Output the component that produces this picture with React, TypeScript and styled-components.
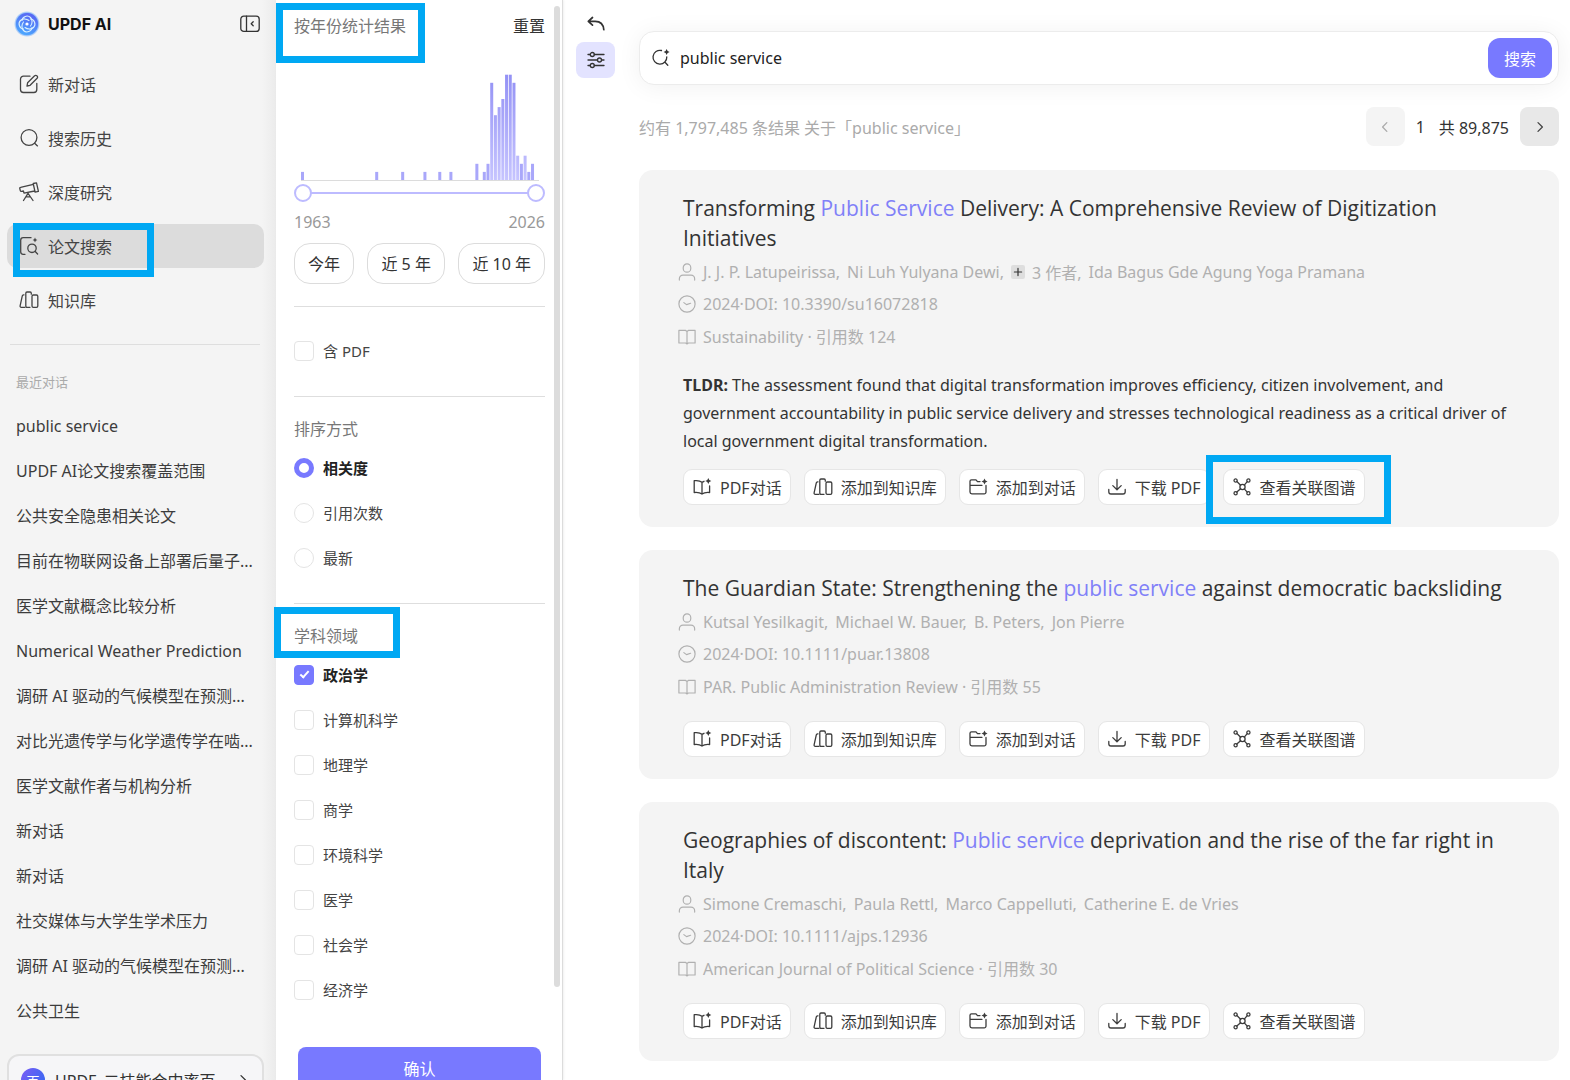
import React, { useState } from "react";
import styled, { createGlobalStyle, css } from "styled-components";

const accent = "#7879ff";
const marker = "#00a8f3";

const GlobalStyle = createGlobalStyle`
  *, *::before, *::after { box-sizing: border-box; }
  body {
    margin: 0;
    background: #fff;
    color: #333;
    font-family: "Noto Sans", "Noto Sans CJK SC", sans-serif;
    font-size: 16px;
  }
  button, input { font: inherit; color: inherit; }
  button { cursor: pointer; }
  h1, h2, h3, p, ul { margin: 0; padding: 0; font-weight: 400; }
  ul { list-style: none; }
`;

/* ---------- layout ---------- */

const Page = styled.div`
  display: grid;
  grid-template-columns: 276px 287px minmax(0, 1fr);
  height: 100vh;
  overflow: hidden;
`;

const Sidebar = styled.aside`
  position: relative;
  background: linear-gradient(90deg, #f4f4f4 0, #f4f4f4 262px, #ebebeb 276px);
  padding: 0 12px 0 7px;
  height: 100vh;
`;

const FilterPanel = styled.aside`
  position: relative;
  height: 100vh;
  border-right: 1px solid #dcdcdc;
  box-shadow: 1px 0 2px rgba(0, 0, 0, 0.06);
  padding: 0 17px 0 18px;
`;

const Main = styled.main`
  display: grid;
  grid-template-columns: 39px minmax(0, 1fr);
  column-gap: 24px;
  padding: 0 11px 0 13px;
`;

/* A thick highlight frame laid over part of the page */
const Frame = styled.span<{ $inset: string }>`
  position: absolute;
  inset: ${(p) => p.$inset};
  border: 7px solid ${marker};
  pointer-events: none;
  z-index: 2;
`;

/* ---------- sidebar ---------- */

const Brand = styled.header`
  display: flex;
  align-items: center;
  gap: 8px;
  height: 48px;
  padding: 0 4px 0 7px;
`;

const BrandName = styled.h1`
  flex: 1;
  color: #111;
  font-family: Inter, sans-serif;
  font-size: 16px;
  font-weight: 700;
`;

const IconButton = styled.button`
  display: flex;
  padding: 0;
  border: 0;
  background: none;
`;

const Nav = styled.nav`
  display: flex;
  flex-direction: column;
  gap: 10px;
  margin-top: 14px;
`;

const NavItem = styled.a<{ $active?: boolean }>`
  position: relative;
  display: flex;
  align-items: center;
  gap: 9px;
  height: 44px;
  padding-left: 12px;
  border-radius: 10px;
  color: #444;
  text-decoration: none;
  background: ${(p) => (p.$active ? "#dcdcdc" : "transparent")};
`;

const RecentSection = styled.section`
  margin: 22px 4px 0 3px;
  border-top: 1px solid #dedede;
  padding: 22px 0 0 6px;
`;

const RecentTitle = styled.h2`
  color: #aaa;
  font-size: 13px;
  line-height: 30px;
`;

const RecentList = styled.ul`
  margin-top: 7px;
`;

const RecentLink = styled.a`
  display: block;
  color: #3c3c3c;
  line-height: 45px;
  text-decoration: none;
  white-space: nowrap;
`;

const Account = styled.button`
  display: flex;
  align-items: center;
  gap: 10px;
  width: 100%;
  height: 52px;
  margin-top: 20px;
  padding: 0 11px 0 12px;
  border: 2px solid #e0e0e0;
  border-radius: 12px;
  background: #f6f6f8;
  text-align: left;
`;

const Avatar = styled.span`
  display: grid;
  place-items: center;
  width: 24px;
  height: 24px;
  border-radius: 50%;
  background: linear-gradient(120deg, #7b5cf5, #2f6bf2);
  color: #fff;
  font-size: 13px;
`;

const AccountName = styled.span`
  flex: 1;
  white-space: nowrap;
`;

/* ---------- filters ---------- */

const FilterHead = styled.header`
  position: relative;
  display: flex;
  align-items: center;
  justify-content: space-between;
  height: 50px;
`;

const Muted = styled.h2`
  color: #777;
  font-size: 16px;
`;

const ResetButton = styled.button`
  padding: 0;
  border: 0;
  background: none;
  color: #333;
`;

const Chart = styled.svg`
  display: block;
  width: 100%;
  height: 129px;
  margin-top: 2px;
`;

const RangeSlider = styled.div`
  display: grid;
  height: 18px;
  margin-top: 3px;
  background: linear-gradient(#bdbbff, #bdbbff) center / calc(100% - 32px) 2px no-repeat;
`;

const RangeInput = styled.input`
  grid-area: 1 / 1;
  width: 100%;
  height: 18px;
  margin: 0;
  appearance: none;
  background: none;
  pointer-events: none;
  &::-webkit-slider-thumb {
    appearance: none;
    width: 18px;
    height: 18px;
    border: 2px solid #bdbbff;
    border-radius: 50%;
    background: #fff;
    pointer-events: auto;
  }
`;

const YearRow = styled.div`
  display: flex;
  justify-content: space-between;
  margin-top: 8px;
  color: #999;
  line-height: 24px;
`;

const PillRow = styled.div`
  display: flex;
  justify-content: space-between;
  margin-top: 9px;
`;

const Pill = styled.button`
  height: 41px;
  padding: 0 13px 2px;
  border: 1px solid #dcdcdc;
  border-radius: 16px;
  background: #fff;
`;

const YearSection = styled.section`
  padding-bottom: 22px;
`;

const OptionSection = styled.fieldset<{ $padding: string }>`
  position: relative;
  min-width: 0;
  margin: 0;
  padding: ${(p) => p.$padding};
  border: 0;
  border-top: 1px solid #dedede;
`;

const OptionTitle = styled(Muted)`
  line-height: 31px;
`;

const OptionRow = styled.label<{ $checked?: boolean }>`
  display: flex;
  align-items: center;
  gap: 9px;
  height: 45px;
  color: ${(p) => (p.$checked ? "#222" : "#444")};
  font-size: 15px;
  font-weight: ${(p) => (p.$checked ? 700 : 400)};
  cursor: pointer;
`;

const control = css`
  appearance: none;
  flex: none;
  width: 20px;
  height: 20px;
  margin: 0;
  border: 1px solid #e4e4e4;
  background: #fff;
`;

const Checkbox = styled.input`
  ${control}
  display: grid;
  place-items: center;
  border-radius: 4px;
  &:checked {
    border-color: ${accent};
    background: ${accent};
  }
  &:checked::after {
    content: "";
    width: 9px;
    height: 5px;
    border: solid #fff;
    border-width: 0 0 2px 2px;
    transform: translateY(-1px) rotate(-48deg);
  }
`;

const Radio = styled.input`
  ${control}
  border-radius: 50%;
  &:checked { border: 5px solid ${accent}; }
`;

const ConfirmButton = styled.button`
  display: block;
  width: calc(100% - 8px);
  height: 42px;
  margin: 35px 4px 0;
  border: 0;
  border-radius: 8px;
  background: ${accent};
  color: #fff;
`;

const ScrollThumb = styled.span`
  position: absolute;
  top: 6px;
  right: 2px;
  width: 6px;
  height: calc(100% - 99px);
  border-radius: 3px;
  background: #dcdcdc;
`;

const SubjectFrame = styled(Frame)`
  height: 51px;
`;

/* ---------- results ---------- */

const Tools = styled.div`
  display: flex;
  flex-direction: column;
  align-items: center;
  gap: 8px;
  padding-top: 14px;
`;

const FilterToggle = styled(IconButton)`
  align-items: center;
  justify-content: center;
  width: 39px;
  height: 36px;
  border-radius: 8px;
  background: #e3e3ff;
`;

const Results = styled.div`
  min-width: 0;
  padding-top: 31px;
`;

const SearchBar = styled.form`
  display: flex;
  align-items: center;
  gap: 9px;
  height: 54px;
  padding: 0 6px 0 11px;
  border: 1px solid #ececec;
  border-radius: 15px;
  background: #fff;
  box-shadow: 0 2px 24px rgba(0, 0, 0, 0.06);
`;

const SearchInput = styled.input`
  flex: 1;
  min-width: 0;
  padding: 0;
  border: 0;
  outline: 0;
  background: none;
  color: #222;
`;

const SearchButton = styled.button`
  width: 64px;
  height: 40px;
  border: 0;
  border-radius: 12px;
  background: ${accent};
  color: #fff;
`;

const Summary = styled.div`
  display: flex;
  align-items: center;
  justify-content: space-between;
  margin: 22px 0 24px;
`;

const SummaryText = styled.p`
  color: #aaa;
`;

const Pager = styled.div`
  display: flex;
  align-items: center;
  gap: 11px;
`;

const PageNumber = styled.span`
  padding-right: 3px;
`;

const PagerButton = styled.button`
  display: grid;
  place-items: center;
  width: 39px;
  height: 39px;
  padding: 0;
  border: 0;
  border-radius: 8px;
  background: #e8e8e8;
  color: #444;
  &:disabled { background: #f4f4f4; color: #aaa; }
`;

const CardList = styled.div`
  display: flex;
  flex-direction: column;
  gap: 23px;
`;

const Card = styled.article`
  padding: 23px 44px 22px;
  border-radius: 14px;
  background: #f4f4f4;
`;

const CardTitle = styled.h3`
  color: #333;
  font-family: "Open Sans", "Noto Sans CJK SC", sans-serif;
  font-size: 21px;
  line-height: 30px;
`;

const Hit = styled.em`
  color: #8080f8;
  font-style: normal;
`;

const MetaList = styled.ul`
  margin: 3px 0 0 -5px;
  color: #b0b0b0;
`;

const MetaRow = styled.li`
  display: flex;
  align-items: center;
  gap: 7px;
  height: 32px;
  white-space: nowrap;
`;

const Authors = styled.span`
  display: flex;
  align-items: center;
  gap: 7px;
`;

const MoreAuthors = styled.button`
  display: grid;
  place-items: center;
  width: 14px;
  height: 14px;
  padding: 0;
  border: 0;
  border-radius: 2px;
  background: #dedede;
  color: #333;
`;

const Tldr = styled.p`
  margin-top: 19px;
  color: #333;
  line-height: 28px;
`;

const Actions = styled.div<{ $afterText?: boolean }>`
  display: flex;
  gap: 13px;
  margin-top: ${(p) => (p.$afterText ? 14 : 19)}px;
`;

const ActionSlot = styled.div`
  position: relative;
`;

const ActionButton = styled.button`
  display: flex;
  align-items: center;
  gap: 8px;
  height: 36px;
  padding: 0 8px;
  border: 1px solid #e6e6e6;
  border-radius: 9px;
  background: #fff;
  color: #3c3c3c;
  white-space: nowrap;
`;

/* ---------- icons ---------- */

const Glyph = styled.svg`
  display: block;
  flex: none;
  fill: none;
  stroke: currentColor;
  stroke-linecap: round;
  stroke-linejoin: round;
`;

type IconProps = { size?: number; weight?: number; children: React.ReactNode };

const Icon = ({ size = 20, weight = 1.3, children }: IconProps) => (
  <Glyph width={size} height={size} viewBox="0 0 20 20" strokeWidth={weight} aria-hidden="true">
    {children}
  </Glyph>
);

const spark = "M0 -3 L1 -1 L3 0 L1 1 L0 3 L-1 1 L-3 0 L-1 -1 Z";

const LogoIcon = () => (
  <Glyph width={26} height={26} viewBox="0 0 26 26" aria-hidden="true">
    <defs>
      <radialGradient id="logo-glow" cx="0.5" cy="0.5" r="0.5">
        <stop offset="0.8" stopColor="#5aa0fb" />
        <stop offset="1" stopColor="#5aa0fb" stopOpacity="0" />
      </radialGradient>
      <linearGradient id="logo-fill" x1="0.7" y1="0" x2="0.3" y2="1">
        <stop offset="0" stopColor="#5a62f2" />
        <stop offset="1" stopColor="#4aa9ff" />
      </linearGradient>
    </defs>
    <circle cx="13" cy="13" r="13" fill="url(#logo-glow)" stroke="none" />
    <circle cx="13" cy="13" r="11" fill="url(#logo-fill)" stroke="none" />
    <g stroke="#d9f1ff" strokeWidth="1.1">
      {[0, 90, 180, 270].map((a) => (
        <path key={a} transform={`rotate(${a} 13 13)`} d="M8 9.5C8.3 5.6 13.5 3.5 16.5 6.500C18.7 8.7 18.5 12.5 16.5 15" />
      ))}
    </g>
    <circle cx="13" cy="13" r="1.6" fill="#fff" stroke="none" />
  </Glyph>
);

const CollapseIcon = () => (
  <Icon weight={1.3}>
    <rect x="0.8" y="2.2" width="18.4" height="15.2" rx="3" />
    <path d="M6.500 2.200v15.200M13.200 7.800l-2 2 2 2" />
  </Icon>
);

const ComposeIcon = () => (
  <Icon>
    <path d="M11 2.200H4.500A3 3 0 0 0 1.500 5.200v10.300a3 3 0 0 0 3 3h10.300a3 3 0 0 0 3-3V9.500" />
    <path d="M8 12l.6-3.200 7-7a1.500 1.500 0 0 1 2.200 0l.3.300a1.500 1.500 0 0 1 0 2.200l-7 7z" />
  </Icon>
);

const SearchIcon = () => (
  <Icon>
    <circle cx="10" cy="9.500" r="7.900" />
    <path d="M15.600 15.200l2.900 2.700" />
  </Icon>
);

const TelescopeIcon = () => (
  <Icon>
    <path d="M14.200 1.500l3.300-.7 1.900 8.600-3.300.7zM14.300 2.300L1.600 5.300a1 1 0 0 0-.8 1.200l.5 2.100a1 1 0 0 0 1.200.8l1.900-.4.6 2.200 10.600-2.200" />
    <path d="M9 11.400L4.500 18.500M9 11.400l5 7.100M7 14.800h4.500" />
  </Icon>
);

const PaperSearchIcon = () => (
  <Icon>
    <path d="M12 1.700H4.200a2.500 2.500 0 0 0-2.500 2.500v11.600a2.500 2.500 0 0 0 2.500 2.500H6" />
    <circle cx="13" cy="12.300" r="4.200" />
    <path d="M16 15.300l2.600 2.700" />
    <path d={spark} transform="translate(16 4) scale(0.8)" fill="currentColor" stroke="none" />
  </Icon>
);

const BooksIcon = () => (
  <Icon>
    <path d="M5 4.800H4.500a1.200 1.200 0 0 0-1.200 1L1.100 15.800a1.200 1.200 0 0 0 1.200 1.500H6" />
    <path d="M11 17.300H8a1.200 1.200 0 0 1-1.200-1.200V3.200A1.200 1.200 0 0 1 8 2h3.100a1.200 1.200 0 0 1 1.200 1.200v1" />
    <rect x="13" y="5" width="5.800" height="12.300" rx="1.300" />
  </Icon>
);

const ReturnIcon = () => (
  <Icon weight={1.7}>
    <path d="M6.500 3.500L2.300 7.300l4.200 3.800M2.800 7.300h6.400c5 0 8.200 3.200 8.600 8.400" />
  </Icon>
);

const SlidersIcon = () => (
  <Icon>
    <path d="M2 4.500h2.300M8.300 4.500H18M2 10h9.500M15.500 10H18M2 15.500h2.300M8.300 15.500H18" />
    <circle cx="6.300" cy="4.500" r="2" />
    <circle cx="13.500" cy="10" r="2" />
    <circle cx="6.300" cy="15.500" r="2" />
  </Icon>
);

const SmartSearchIcon = () => (
  <Icon>
    <path d="M10.500 2.500A6.900 6.900 0 1 0 15.800 8.800M14 14.300l2.800 3" />
    <path d={spark} transform="translate(15.600 4)" fill="currentColor" stroke="none" />
  </Icon>
);

const ChevronIcon = ({ left }: { left?: boolean }) => (
  <Icon size={16} weight={1.6}>
    <path d={left ? "M12.300 4.500L7 10l5.300 5.500" : "M7.500 4.500l5.500 5.500-5.500 5.500"} />
  </Icon>
);

const PersonIcon = () => (
  <Icon size={18}>
    <rect x="5.800" y="1" width="8.400" height="9.200" rx="4.200" />
    <path d="M1.500 19v-1.500a4 4 0 0 1 4-4h9a4 4 0 0 1 4 4V19" />
  </Icon>
);

const ClockIcon = () => (
  <Icon size={18}>
    <circle cx="10" cy="10" r="9" />
    <path d="M6.500 8.500l3 2.200 4.500-1.500" />
  </Icon>
);

const JournalIcon = () => (
  <Icon size={18}>
    <path d="M1 3.800h7.500L10 5l1.500-1.200H19v14h-7.500L10 18.800l-1.500-1H1zM10 5v13.800" />
  </Icon>
);

const ReadIcon = () => (
  <Icon>
    <path d="M10 5.300v11.800M12 4.300L10 5.300C8.200 3.700 5.500 3.300 2.200 3.700V15.500c3-.3 5.800 0 7.800 1.600 2-1.600 4.500-1.900 7.600-1.600V9" />
    <path d={spark} transform="translate(16.300 4)" fill="currentColor" stroke="none" />
  </Icon>
);

const FolderIcon = () => (
  <Icon>
    <path d="M12 4.600H9.500L8 2.800H3.500A1.500 1.500 0 0 0 2 4.300v10.800a1.800 1.800 0 0 0 1.800 1.800h12.400a1.800 1.800 0 0 0 1.800-1.800V8.500M2 8.300h12" />
    <path d={spark} transform="translate(16.500 4.500)" fill="currentColor" stroke="none" />
  </Icon>
);

const DownloadIcon = () => (
  <Icon>
    <path d="M10 2.500v10M5.800 8.600L10 12.800l4.200-4.200M1.800 12.500v2.300a2.200 2.200 0 0 0 2.200 2.200h12a2.200 2.200 0 0 0 2.200-2.200v-2.300" />
  </Icon>
);

const GraphIcon = () => (
  <Icon>
    <circle cx="10.500" cy="10" r="2.600" />
    <circle cx="3.600" cy="3.500" r="1.600" />
    <circle cx="16.400" cy="3.500" r="1.600" />
    <circle cx="3.600" cy="16.200" r="1.600" />
    <circle cx="16.400" cy="16.200" r="1.600" />
    <path d="M4.900 4.500l3.700 3.700M15.200 4.600l-2.900 3.500M4.800 15.100l3.800-3.300M15.200 15.100l-2.900-3.200" />
  </Icon>
);

/* ---------- data ---------- */

const navItems = [
  { label: "新对话", icon: <ComposeIcon /> },
  { label: "搜索历史", icon: <SearchIcon /> },
  { label: "深度研究", icon: <TelescopeIcon /> },
  { label: "论文搜索", icon: <PaperSearchIcon />, active: true },
  { label: "知识库", icon: <BooksIcon /> },
];

const recent = [
  "public service",
  "UPDF AI论文搜索覆盖范围",
  "公共安全隐患相关论文",
  "目前在物联网设备上部署后量子...",
  "医学文献概念比较分析",
  "Numerical Weather Prediction",
  "调研 AI 驱动的气候模型在预测...",
  "对比光遗传学与化学遗传学在啮...",
  "医学文献作者与机构分析",
  "新对话",
  "新对话",
  "社交媒体与大学生学术压力",
  "调研 AI 驱动的气候模型在预测...",
  "公共卫生",
];

const firstYear = 1963;
const lastYear = 2026;

/* papers per year: [year, count] */
const histogram = [
  [1963, 1], [1983, 1], [1990, 1], [1996, 1], [2000, 1], [2003, 1],
  [2010, 2], [2012, 1], [2013, 2], [2014, 12], [2015, 8], [2016, 9],
  [2017, 10], [2018, 13], [2019, 13], [2020, 12], [2021, 3], [2022, 2],
  [2023, 3], [2024, 1], [2025, 2],
];

const sortOptions = ["相关度", "引用次数", "最新"];
const fields = ["政治学", "计算机科学", "地理学", "商学", "环境科学", "医学", "社会学", "经济学"];

const actions = [
  { label: "PDF对话", icon: <ReadIcon /> },
  { label: "添加到知识库", icon: <BooksIcon /> },
  { label: "添加到对话", icon: <FolderIcon /> },
  { label: "下载 PDF", icon: <DownloadIcon /> },
  { label: "查看关联图谱", icon: <GraphIcon /> },
];

type Paper = {
  title: [string, string, string];
  authors: string[];
  hidden?: number;
  doi: string;
  journal: string;
  cited: number;
  tldr?: string;
  framed?: boolean;
};

const papers: Paper[] = [
  {
    title: ["Transforming ", "Public Service", " Delivery: A Comprehensive Review of Digitization Initiatives"],
    authors: ["J. J. P. Latupeirissa,", "Ni Luh Yulyana Dewi,", "Ida Bagus Gde Agung Yoga Pramana"],
    hidden: 3,
    doi: "10.3390/su16072818",
    journal: "Sustainability",
    cited: 124,
    tldr: "The assessment found that digital transformation improves efficiency, citizen involvement, and government accountability in public service delivery and stresses technological readiness as a critical driver of local government digital transformation.",
    framed: true,
  },
  {
    title: ["The Guardian State: Strengthening the ", "public service", " against democratic backsliding"],
    authors: ["Kutsal Yesilkagit,", "Michael W. Bauer,", "B. Peters,", "Jon Pierre"],
    doi: "10.1111/puar.13808",
    journal: "PAR. Public Administration Review",
    cited: 55,
  },
  {
    title: ["Geographies of discontent: ", "Public service", " deprivation and the rise of the far right in Italy"],
    authors: ["Simone Cremaschi,", "Paula Rettl,", "Marco Cappelluti,", "Catherine E. de Vries"],
    doi: "10.1111/ajps.12936",
    journal: "American Journal of Political Science",
    cited: 30,
  },
];

/* ---------- parts ---------- */

const YearChart = () => (
  <Chart viewBox="0 0 251 129" preserveAspectRatio="none" role="img" aria-label="按年份统计结果">
    <defs>
      <linearGradient id="bar-fill" gradientUnits="userSpaceOnUse" x1="0" y1="23" x2="0" y2="128">
        <stop offset="0" stopColor="#9492f5" />
        <stop offset="1" stopColor="#c6c4ff" />
      </linearGradient>
    </defs>
    {histogram.map(([year, count]) => (
      <rect
        key={year}
        x={7 + (year - firstYear) * 3.71}
        y={128 - count * 8.1}
        width="3"
        height={count * 8.1}
        fill={count < 3 ? "#a9a7fa" : "url(#bar-fill)"}
      />
    ))}
    <path d="M7 128.500H245" stroke="#dcdcdc" />
  </Chart>
);

const PaperCard = ({ paper }: { paper: Paper }) => (
  <Card>
    <CardTitle>
      {paper.title[0]}
      <Hit>{paper.title[1]}</Hit>
      {paper.title[2]}
    </CardTitle>
    <MetaList>
      <MetaRow>
        <PersonIcon />
        <Authors>
          {paper.authors.map((name, i) => (
            <React.Fragment key={name}>
              {paper.hidden && i === 2 ? (
                <>
                  <MoreAuthors aria-label="展开作者">
                    <Icon size={12} weight={2}>
                      <path d="M10 4v12M4 10h12" />
                    </Icon>
                  </MoreAuthors>
                  <span>{paper.hidden} 作者,</span>
                </>
              ) : null}
              <span>{name}</span>
            </React.Fragment>
          ))}
        </Authors>
      </MetaRow>
      <MetaRow>
        <ClockIcon />
        <span>2024·DOI: {paper.doi}</span>
      </MetaRow>
      <MetaRow>
        <JournalIcon />
        <span>
          {paper.journal} · 引用数 {paper.cited}
        </span>
      </MetaRow>
    </MetaList>
    {paper.tldr ? (
      <Tldr>
        <strong>TLDR:</strong> {paper.tldr}
      </Tldr>
    ) : null}
    <Actions $afterText={Boolean(paper.tldr)}>
      {actions.map((action, i) => (
        <ActionSlot key={action.label}>
          <ActionButton type="button">
            {action.icon}
            {action.label}
          </ActionButton>
          {paper.framed && i === actions.length - 1 ? <Frame $inset="-14px -26px -19px -17px" /> : null}
        </ActionSlot>
      ))}
    </Actions>
  </Card>
);

export default function App() {
  const [query, setQuery] = useState("public service");
  const [from, setFrom] = useState(firstYear);
  const [to, setTo] = useState(lastYear);
  const [sort, setSort] = useState("相关度");
  const [hasPdf, setHasPdf] = useState(false);
  const [picked, setPicked] = useState(["政治学"]);

  const toggle = (field: string) =>
    setPicked((list) => (list.includes(field) ? list.filter((f) => f !== field) : [...list, field]));

  return (
    <Page>
      <GlobalStyle />
      <Sidebar>
        <Brand>
          <LogoIcon />
          <BrandName>UPDF AI</BrandName>
          <IconButton aria-label="收起侧栏">
            <CollapseIcon />
          </IconButton>
        </Brand>
        <Nav>
          {navItems.map((item) => (
            <NavItem key={item.label} href="#" $active={item.active}>
              {item.icon}
              {item.label}
              {item.active ? <Frame $inset="-1px 110px -9px 6px" /> : null}
            </NavItem>
          ))}
        </Nav>
        <RecentSection>
          <RecentTitle>最近对话</RecentTitle>
          <RecentList>
            {recent.map((label, i) => (
              <li key={i}>
                <RecentLink href="#">{label}</RecentLink>
              </li>
            ))}
          </RecentList>
        </RecentSection>
        <Account>
          <Avatar>百</Avatar>
          <AccountName>UPDF_二技能会中率百</AccountName>
          <ChevronIcon />
        </Account>
      </Sidebar>

      <FilterPanel>
        <YearSection>
          <FilterHead>
            <Muted>按年份统计结果</Muted>
            <ResetButton>重置</ResetButton>
            <Frame $inset="3px 120px -13px -18px" />
          </FilterHead>
          <YearChart />
          <RangeSlider>
            <RangeInput
              type="range"
              aria-label="起始年份"
              min={firstYear}
              max={lastYear}
              value={from}
              onChange={(e) => setFrom(Math.min(Number(e.target.value), to))}
            />
            <RangeInput
              type="range"
              aria-label="结束年份"
              min={firstYear}
              max={lastYear}
              value={to}
              onChange={(e) => setTo(Math.max(Number(e.target.value), from))}
            />
          </RangeSlider>
          <YearRow>
            <span>{from}</span>
            <span>{to}</span>
          </YearRow>
          <PillRow>
            <Pill>今年</Pill>
            <Pill>近 5 年</Pill>
            <Pill>近 10 年</Pill>
          </PillRow>
        </YearSection>

        <OptionSection $padding="21px 0 23px">
          <OptionRow>
            <Checkbox type="checkbox" checked={hasPdf} onChange={() => setHasPdf(!hasPdf)} />
            含 PDF
          </OptionRow>
        </OptionSection>

        <OptionSection $padding="17px 0 23px">
          <OptionTitle>排序方式</OptionTitle>
          {sortOptions.map((option) => (
            <OptionRow key={option} $checked={sort === option}>
              <Radio type="radio" name="sort" checked={sort === option} onChange={() => setSort(option)} />
              {option}
            </OptionRow>
          ))}
        </OptionSection>

        <OptionSection $padding="17px 0 0">
          <OptionTitle>学科领域</OptionTitle>
          <SubjectFrame $inset="3px 145px auto -20px" />
          {fields.map((field) => (
            <OptionRow key={field} $checked={picked.includes(field)}>
              <Checkbox type="checkbox" checked={picked.includes(field)} onChange={() => toggle(field)} />
              {field}
            </OptionRow>
          ))}
        </OptionSection>

        <ConfirmButton>确认</ConfirmButton>
        <ScrollThumb />
      </FilterPanel>

      <Main>
        <Tools>
          <IconButton aria-label="返回">
            <ReturnIcon />
          </IconButton>
          <FilterToggle aria-label="筛选">
            <SlidersIcon />
          </FilterToggle>
        </Tools>
        <Results>
          <SearchBar onSubmit={(e) => e.preventDefault()}>
            <SmartSearchIcon />
            <SearchInput aria-label="搜索论文" value={query} onChange={(e) => setQuery(e.target.value)} />
            <SearchButton>搜索</SearchButton>
          </SearchBar>
          <Summary>
            <SummaryText>约有 1,797,485 条结果 关于「public service」</SummaryText>
            <Pager>
              <PagerButton disabled aria-label="上一页">
                <ChevronIcon left />
              </PagerButton>
              <PageNumber>1</PageNumber>
              <span>共 89,875</span>
              <PagerButton aria-label="下一页">
                <ChevronIcon />
              </PagerButton>
            </Pager>
          </Summary>
          <CardList>
            {papers.map((paper) => (
              <PaperCard key={paper.doi} paper={paper} />
            ))}
          </CardList>
        </Results>
      </Main>
    </Page>
  );
}
